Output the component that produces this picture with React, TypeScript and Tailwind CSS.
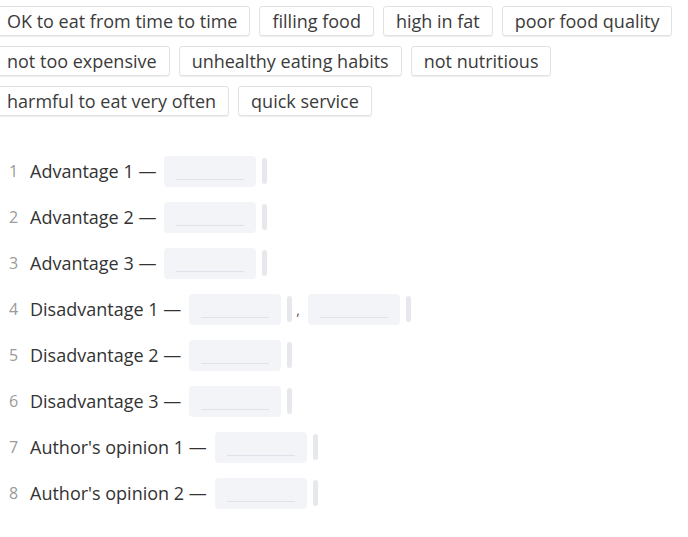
import React from "react";

const chipRows = [
  ["OK to eat from time to time", "filling food", "high in fat", "poor food quality"],
  ["not too expensive", "unhealthy eating habits", "not nutritious"],
  ["harmful to eat very often", "quick service"],
];

const items: { label: string; blanks: number }[] = [
  { label: "Advantage 1", blanks: 1 },
  { label: "Advantage 2", blanks: 1 },
  { label: "Advantage 3", blanks: 1 },
  { label: "Disadvantage 1", blanks: 2 },
  { label: "Disadvantage 2", blanks: 1 },
  { label: "Disadvantage 3", blanks: 1 },
  { label: "Author's opinion 1", blanks: 1 },
  { label: "Author's opinion 2", blanks: 1 },
];

function Blank() {
  return (
    <span className="flex items-center">
      <span className="relative h-[31px] w-[92px] rounded-[4px] bg-[#f3f4f8]">
        <span className="absolute left-[12px] right-[12px] top-[23px] h-px bg-[#dfe2ea]" />
      </span>
      <span className="ml-[6px] h-[26px] w-[5px] rounded-[3px] bg-[#e6e8ec]" />
    </span>
  );
}

export default function App() {
  return (
    <div
      className="h-[537px] w-[688px] overflow-hidden bg-white text-[#333]"
      style={{ fontFamily: '"Open Sans", sans-serif' }}
    >
      <div className="ml-[-6px] pt-[6px] flex flex-col gap-[10px]">
        {chipRows.map((row, i) => (
          <div key={i} className="flex gap-[9px]">
            {row.map((c) => (
              <span
                key={c}
                className="flex h-[30px] items-center whitespace-nowrap rounded-[3px] border border-[#e2e2e2] px-[12px] text-[18px] leading-none text-[#3b3b3b] shadow-[0_1px_1px_rgba(0,0,0,0.07)]"
              >
                {c}
              </span>
            ))}
          </div>
        ))}
      </div>
      <div className="mt-[32px] flex flex-col">
        {items.map((it, i) => (
          <div key={i} className="flex h-[46px] items-center">
            <span className="ml-[9px] w-[21px] text-[16px] text-[#9a9a9a]">{i + 1}</span>
            <span className="whitespace-nowrap text-[18px] text-[#333]">{it.label} —</span>
            <span className="ml-[8px] flex items-center">
              <Blank />
              {it.blanks === 2 && (
                <>
                  <span className="ml-[4px] mr-[8px] text-[14px] text-[#555]">,</span>
                  <Blank />
                </>
              )}
            </span>
          </div>
        ))}
      </div>
    </div>
  );
}
